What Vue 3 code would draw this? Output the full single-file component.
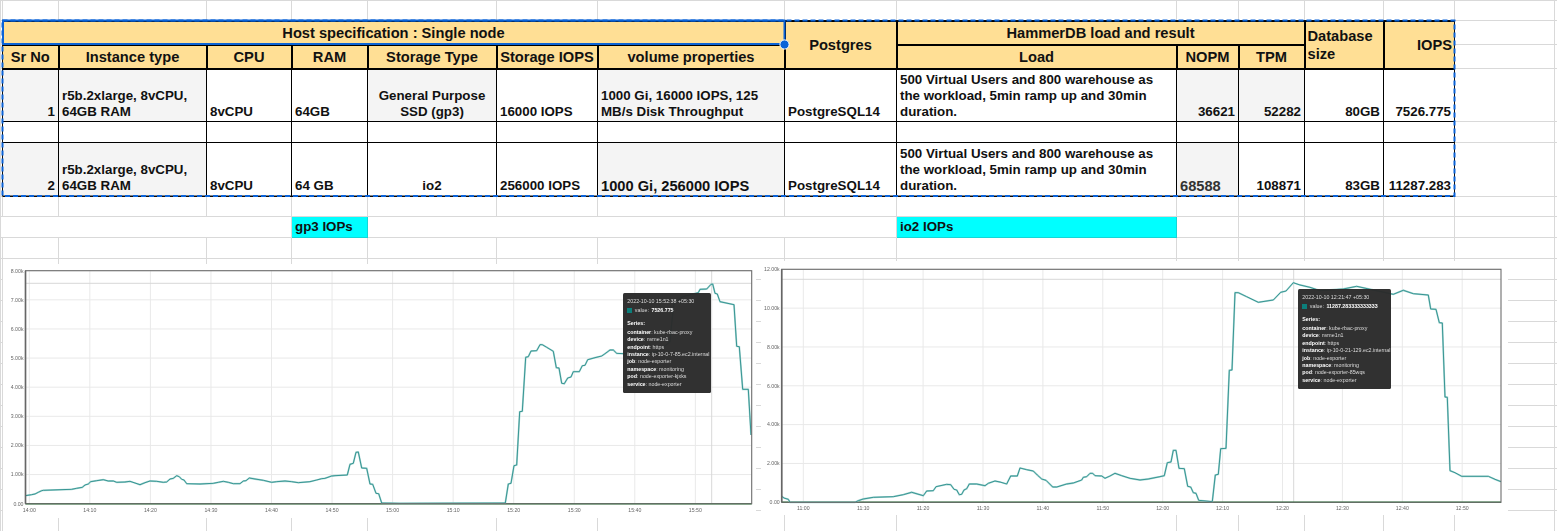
<script setup>
const colWidths = [2, 56, 148, 85, 76, 129, 101, 187, 112, 280, 62, 66, 79, 71, 100, 3]
const fillerRows = 15

const loadText = '500 Virtual Users and 800 warehouse as the workload, 5min ramp up and 30min duration.'

// traced from the screenshot, x/y in page pixels divided out of the 3x zoom
function pts(list, ox, oy) {
  return list.map(([x, y]) => `${(ox + x / 3).toFixed(1)},${(oy + y / 3).toFixed(1)}`).join(' ')
}

const line1 = [
  pts([[76,707],[95,704],[105,702],[115,697],[125,692],[130,691],[215,688],[230,685],[247,682],[255,675],[265,672],[272,665],[290,662],[310,659],[325,663],[340,663],[350,667],[375,666],[390,664],[405,669],[420,674],[435,668],[450,663],[470,664],[490,667],[500,666],[510,657],[520,655],[530,647],[538,650],[545,658],[552,660],[560,671],[600,672],[640,670],[655,667],[670,664],[685,667],[700,671],[720,671],[730,663],[738,662],[748,654],[765,657],[790,661],[815,667],[830,665],[855,663],[875,665],[895,668],[930,665],[950,660],[965,656],[975,655],[995,648],[1005,647],[1042,645],[1050,613],[1060,610],[1068,577],[1075,576],[1085,624],[1100,625],[1110,672],[1118,673],[1128,700],[1136,701],[1145,729],[1200,730]], 0, 260),
  pts([[0,730],[316,729],[325,672],[333,670],[342,617],[350,615],[359,455],[367,454],[377,292],[385,290],[393,273],[410,272],[420,254],[427,254],[440,262],[460,274],[469,323],[477,324],[485,370],[493,371],[503,354],[513,351],[520,335],[538,335],[547,317],[555,316],[563,299],[585,293],[605,288],[615,281],[630,270],[640,270],[650,280],[670,281],[700,283],[740,278],[770,275],[790,262],[810,245],[815,190],[822,130],[848,110],[895,98],[900,88],[920,87],[933,73],[938,72],[945,100],[952,102],[960,125],[1002,134],[1010,259],[1018,260],[1028,388],[1045,388],[1053,525]], 400, 260)
].join(' ')

const line2 = [
  pts([[65,709],[72,714],[85,718],[90,727],[285,727],[295,722],[310,717],[340,712],[400,710],[430,704],[455,697],[490,707],[500,693],[520,692],[528,680],[560,673],[572,674],[582,688],[590,690],[598,704],[605,703],[612,690],[620,686],[628,672],[650,672],[675,677],[685,670],[705,663],[720,666],[740,672],[752,648],[772,648],[780,624],[800,629],[820,633],[832,645],[845,657],[858,661],[878,681],[890,681],[920,672],[940,669],[965,660],[970,652],[980,650],[990,640],[998,640],[1005,647],[1025,648],[1035,655],[1050,648],[1065,640],[1085,647],[1110,655],[1140,660],[1165,657],[1200,650]], 760, 260),
  pts([[13,647],[22,608],[33,606],[40,571],[48,571],[57,625],[73,626],[83,679],[92,681],[100,698],[108,700],[116,721],[157,725],[166,645],[175,643],[182,566],[198,565],[208,331],[216,330],[225,98],[235,98],[260,110],[295,127],[340,120],[362,97],[378,93],[400,68],[420,75],[450,82],[480,92],[550,87],[590,79],[640,90],[700,103],[730,91],[760,101],[805,105],[812,147],[828,148],[838,188],[847,189],[855,411],[862,412],[870,632],[885,638],[905,649],[985,649],[1005,658],[1023,665]], 1160, 260)
].join(' ')

const hours1 = ['14:00', '14:10', '14:20', '14:30', '14:40', '14:50', '15:00', '15:10', '15:20', '15:30', '15:40', '15:50']
const hours2 = ['11:00', '11:10', '11:20', '11:30', '11:40', '11:50', '12:00', '12:10', '12:20', '12:30', '12:40', '12:50']

const charts = [
  {
    id: 'gp3',
    box: { x: 3, y: 264, w: 753, h: 254 },
    plot: { l: 25.5, r: 751.7, t: 270.7, b: 503.7 },
    yLabels: ['8.00k', '7.00k', '6.00k', '5.00k', '4.00k', '3.00k', '2.00k', '1.00k', '0.00'],
    xStart: 29.3,
    xStep: 60.55,
    hours: hours1,
    cross: { x: 711.7, y: 283.3 },
    line: line1,
    tip: {
      x: 623.3, y: 292.7, w: 87.7, h: 100,
      time: '2022-10-10 15:52:38 +05:30',
      value: '7526.775',
      instance: 'ip-10-0-7-85.ec2.internal',
      device: 'nvme1n1',
      pod: 'node-exporter-kjxks'
    }
  },
  {
    id: 'io2',
    box: { x: 761, y: 261, w: 747, h: 254 },
    plot: { l: 781.7, r: 1501, t: 269.3, b: 502.3 },
    yLabels: ['12.00k', '10.00k', '8.00k', '6.00k', '4.00k', '2.00k', '0.00'],
    xStart: 803.3,
    xStep: 59.9,
    hours: hours2,
    cross: { x: 1293.7, y: 279.3 },
    line: line2,
    tip: {
      x: 1298.3, y: 289, w: 92.4, h: 99.7,
      time: '2022-10-10 12:21:47 +05:30',
      value: '11287.283333333333',
      instance: 'ip-10-0-21-129.ec2.internal',
      device: 'nvme1n1',
      pod: 'node-exporter-85wqs'
    }
  }
]

function yAt(c, i) {
  return c.plot.t + ((c.plot.b - c.plot.t) * i) / (c.yLabels.length - 1)
}

function tipRows(t) {
  return [
    ['container', 'kube-rbac-proxy'],
    ['device', t.device],
    ['endpoint', 'https'],
    ['instance', t.instance],
    ['job', 'node-exporter'],
    ['namespace', 'monitoring'],
    ['pod', t.pod],
    ['service', 'node-exporter']
  ]
}
</script>

<template>
  <div class="sheet">
    <table class="grid">
      <colgroup>
        <col v-for="(w, i) in colWidths" :key="i" :width="w" />
      </colgroup>
      <tbody>
        <tr class="r-top">
          <td v-for="i in 16" :key="i"></td>
        </tr>
        <tr class="r-head">
          <td></td>
          <td colspan="7" class="head hd center">Host specification : Single node</td>
          <td rowspan="2" class="head hd center">Postgres</td>
          <td colspan="3" class="head hd center">HammerDB load and result</td>
          <td rowspan="2" class="head hd left wrap">Database size</td>
          <td rowspan="2" class="head hd right end">IOPS</td>
          <td></td>
          <td></td>
        </tr>
        <tr class="r-head">
          <td></td>
          <td class="head hd center start">Sr No</td>
          <td class="head hd center">Instance type</td>
          <td class="head hd center">CPU</td>
          <td class="head hd center">RAM</td>
          <td class="head hd center">Storage Type</td>
          <td class="head hd center">Storage IOPS</td>
          <td class="head hd center">volume properties</td>
          <td class="head hd center">Load</td>
          <td class="head hd center">NOPM</td>
          <td class="head hd center">TPM</td>
          <td></td>
          <td></td>
        </tr>
        <tr class="first">
          <td></td>
          <td class="cell gray right">1</td>
          <td class="cell gray">r5b.2xlarge, 8vCPU, 64GB RAM</td>
          <td class="cell">8vCPU</td>
          <td class="cell">64GB</td>
          <td class="cell gray center">General Purpose SSD (gp3)</td>
          <td class="cell">16000 IOPS</td>
          <td class="cell gray">1000 Gi, 16000 IOPS, 125 MB/s Disk Throughput</td>
          <td class="cell">PostgreSQL14</td>
          <td class="cell">{{ loadText }}</td>
          <td class="cell gray right">36621</td>
          <td class="cell gray right">52282</td>
          <td class="cell right">80GB</td>
          <td class="cell right">7526.775</td>
          <td></td>
          <td></td>
        </tr>
        <tr class="r-gap">
          <td></td>
          <td v-for="i in 13" :key="i" class="cell"></td>
          <td></td>
          <td></td>
        </tr>
        <tr class="second">
          <td></td>
          <td class="cell gray right">2</td>
          <td class="cell gray">r5b.2xlarge, 8vCPU, 64GB RAM</td>
          <td class="cell">8vCPU</td>
          <td class="cell">64 GB</td>
          <td class="cell center">io2</td>
          <td class="cell">256000 IOPS</td>
          <td class="cell gray big">1000 Gi, 256000 IOPS</td>
          <td class="cell">PostgreSQL14</td>
          <td class="cell">{{ loadText }}</td>
          <td class="cell gray big soft">68588</td>
          <td class="cell right">108871</td>
          <td class="cell right">83GB</td>
          <td class="cell right">11287.283</td>
          <td></td>
          <td></td>
        </tr>
        <tr class="r-gap short">
          <td v-for="i in 16" :key="i"></td>
        </tr>
        <tr class="r-gap">
          <td colspan="4"></td>
          <td class="tag">gp3 IOPs</td>
          <td colspan="4"></td>
          <td class="tag">io2 IOPs</td>
          <td v-for="i in 6" :key="i"></td>
        </tr>
        <tr v-for="n in fillerRows" :key="n" class="r-gap">
          <td v-for="i in 16" :key="i"></td>
        </tr>
      </tbody>
    </table>

    <!-- range selection and active cell, drawn on top of the table -->
    <svg class="selection" width="1557" height="200" aria-hidden="true">
      <rect x="2.5" y="20.5" width="1452" height="175.5" fill="none" stroke="#111" stroke-width="1" />
      <rect x="2.5" y="20.5" width="1452" height="175.5" fill="none" stroke="#0b63d8" stroke-width="2" stroke-dasharray="5 3" />
      <rect x="3" y="20.5" width="781.5" height="23.5" fill="none" stroke="#0b63d8" stroke-width="2" />
      <circle cx="784.5" cy="44.5" r="4.6" fill="#0b63d8" stroke="#fff" stroke-width="1" />
    </svg>

    <!-- pasted chart pictures float over the cells -->
    <div
      v-for="c in charts"
      :key="c.id"
      class="chart"
      :style="{ left: c.box.x + 'px', top: c.box.y + 'px', width: c.box.w + 'px', height: c.box.h + 'px' }"
    >
      <svg
        class="chart-svg"
        :width="c.box.w"
        :height="c.box.h"
        :viewBox="`${c.box.x} ${c.box.y} ${c.box.w} ${c.box.h}`"
      >
        <line
          v-for="(l, i) in c.yLabels"
          :key="'h' + i"
          :x1="c.plot.l" :x2="c.plot.r" :y1="yAt(c, i)" :y2="yAt(c, i)"
          class="gridline"
        />
        <line
          v-for="(h, i) in c.hours"
          :key="'v' + i"
          :x1="c.xStart + c.xStep * i" :x2="c.xStart + c.xStep * i" :y1="c.plot.t" :y2="c.plot.b"
          class="gridline"
        />
        <line :x1="c.plot.l" :x2="c.plot.r" :y1="c.cross.y" :y2="c.cross.y" class="cross" />
        <line :x1="c.cross.x" :x2="c.cross.x" :y1="c.plot.t" :y2="c.plot.b" class="cross" />
        <line :x1="c.plot.l" :x2="c.plot.r" :y1="c.plot.b" :y2="c.plot.b" class="base" />
        <polyline :points="c.line" class="halo" />
        <polyline :points="c.line" class="series" />
        <rect
          :x="c.plot.l" :y="c.plot.t"
          :width="c.plot.r - c.plot.l" :height="c.plot.b - c.plot.t"
          class="frame"
        />
        <line :x1="c.plot.l" :x2="c.plot.l" :y1="c.plot.t" :y2="c.plot.b" class="frame-left" />
        <text
          v-for="(l, i) in c.yLabels"
          :key="'yl' + i"
          :x="c.plot.l - 2" :y="yAt(c, i) + 1.8"
          text-anchor="end"
          class="axis"
        >{{ l }}</text>
        <text
          v-for="(h, i) in c.hours"
          :key="'xl' + i"
          :x="c.xStart + c.xStep * i" :y="c.plot.b + 8"
          text-anchor="middle"
          class="axis"
        >{{ h }}</text>
      </svg>
      <div
        class="tip"
        :style="{
          left: c.tip.x - c.box.x + 'px',
          top: c.tip.y - c.box.y + 'px',
          width: c.tip.w + 'px',
          height: c.tip.h + 'px'
        }"
      >
        <div class="tip-time">{{ c.tip.time }}</div>
        <div class="tip-value"><span class="swatch"></span>value: <b>{{ c.tip.value }}</b></div>
        <div class="tip-series"><b>Series:</b></div>
        <div v-for="r in tipRows(c.tip)" :key="r[0]" class="tip-row"><b>{{ r[0] }}</b>: {{ r[1] }}</div>
      </div>
    </div>
  </div>
</template>

<style scoped>
.sheet {
  position: relative;
  width: 1557px;
  height: 531px;
  overflow: hidden;
  background: #fff;
  font-family: "Liberation Sans", Arial, sans-serif;
  color: #111;
}

.grid {
  border-collapse: collapse;
  table-layout: fixed;
  width: 1557px;
  font-size: 13.33px;
  font-weight: 700;
  line-height: 16px;
}

.grid td {
  border: 1px solid #d9d9d9;
  padding: 0 3px;
  overflow: hidden;
}

.r-top { height: 20px; }
.r-head { height: 24px; }
.first { height: 53px; }
.second { height: 54px; }
.r-gap { height: 21px; }
.r-gap.short { height: 20px; }

.grid td.head {
  background: #ffdf95;
  border: 2px solid #000;
  font-size: 14.67px;
  line-height: 18px;
  padding: 0 2px;
  white-space: nowrap;
}

.grid td.head.wrap {
  white-space: normal;
}

.grid td.head.end {
  border-right-width: 1px;
}

.grid td.head.start {
  border-left-width: 1px;
}

.grid td.cell {
  border: 1px solid #000;
  vertical-align: bottom;
  padding-bottom: 1px;
}

.second td.cell {
  padding-bottom: 2px;
}

.grid td.gray { background: #f4f4f4; }
.center { text-align: center; }
.left { text-align: left; }
.right { text-align: right; }
.big { font-size: 14.67px; }
.soft { color: #333; }

.grid td.tag {
  background: #00ffff;
  border: 1px solid #14d6d6;
}

.selection {
  position: absolute;
  left: 0;
  top: 0;
  pointer-events: none;
}

.chart {
  position: absolute;
  background: #fff;
}

.chart-svg {
  display: block;
  filter: blur(0.35px);
}

.gridline {
  stroke: #e9e9e9;
  stroke-width: 1;
}

.cross {
  stroke: #d8d8d8;
  stroke-width: 1;
}

.base {
  stroke: #2c7a3a;
  stroke-width: 1.4;
}

.halo {
  fill: none;
  stroke: #a9d6d3;
  stroke-width: 1.8;
}

.series {
  fill: none;
  stroke: #2a8f8c;
  stroke-width: 0.9;
}

.frame {
  fill: none;
  stroke: #6d6d6d;
  stroke-width: 1.1;
}

.frame-left {
  stroke: #666;
  stroke-width: 1.6;
}

.axis {
  font-family: "Liberation Sans", Arial, sans-serif;
  font-size: 5.2px;
  fill: #666;
}

.tip {
  position: absolute;
  box-sizing: border-box;
  padding: 5px 2px 0 4px;
  background: rgba(42, 42, 42, 0.97);
  border-radius: 1.5px;
  color: #ddd;
  font-size: 5.3px;
  line-height: 7.4px;
  white-space: nowrap;
  overflow: hidden;
  filter: blur(0.25px);
}

.tip b {
  color: #fff;
}

.tip-value {
  display: flex;
  align-items: center;
  gap: 1.5px;
  margin-top: 1.5px;
}

.tip-value b {
  margin-left: 1px;
}

.swatch {
  width: 5px;
  height: 5px;
  background: #0c7f7b;
  margin-right: 1px;
}

.tip-series {
  margin-top: 5.5px;
  margin-bottom: 1.8px;
}
</style>

<style>
html,
body {
  margin: 0;
  background: #fff;
}
</style>
